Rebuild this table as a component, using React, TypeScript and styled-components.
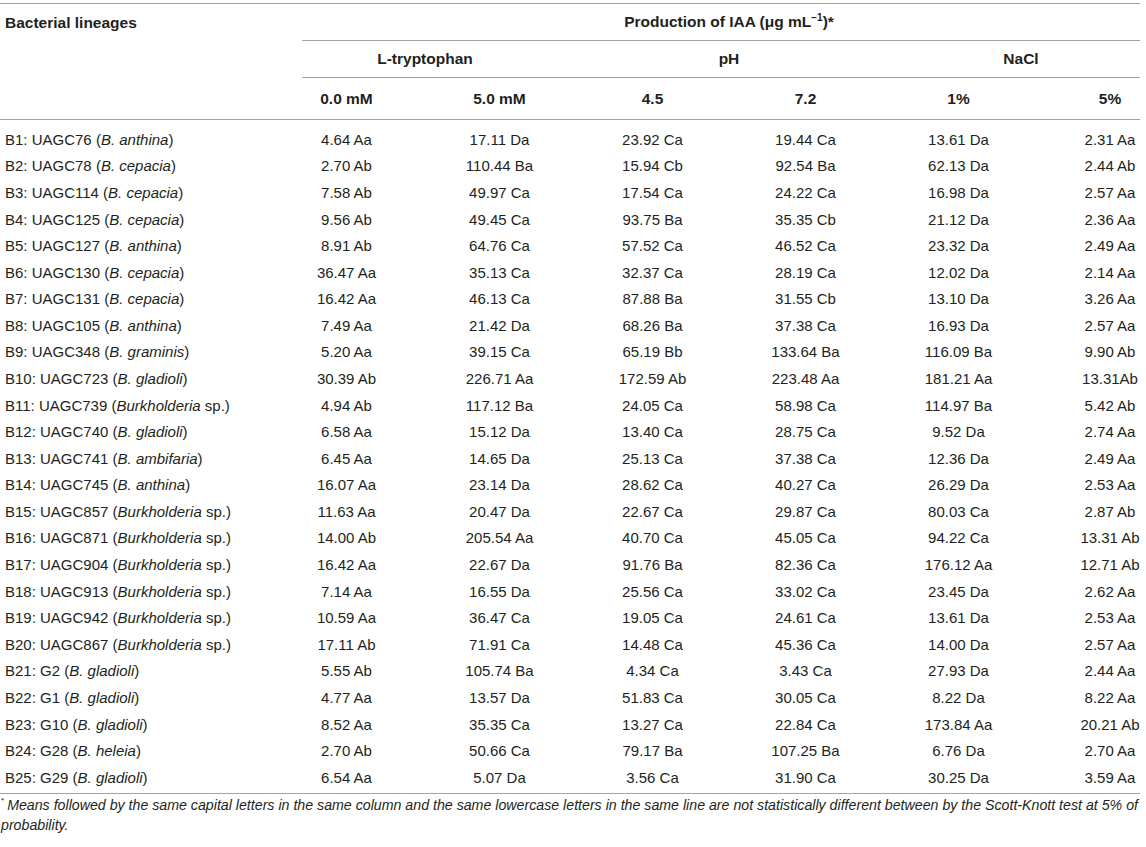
import React from "react";
import styled, { createGlobalStyle } from "styled-components";

const GlobalStyle = createGlobalStyle`
  html, body { margin: 0; padding: 0; background: #ffffff; }
  body { font-family: "Liberation Sans", Arial, Helvetica, sans-serif; color: #231f20; }
`;

const COLS = "270px repeat(5, 153px) 105px";
const RULE = "#a3a3a3";

const Page = styled.div`
  width: 1140px;
  padding-top: 3px;
`;

const Head = styled.div`
  display: grid;
  grid-template-columns: ${COLS};
  grid-template-rows: 37px 37px 41px;
  border-top: 1px solid ${RULE};
  border-bottom: 1px solid ${RULE};
  font-size: 15.5px;
  font-weight: 700;
`;

const Corner = styled.div`
  grid-column: 1;
  grid-row: 1 / 4;
  padding: 10px 0 0 5px;
  line-height: 18px;
`;

const Group = styled.div<{ $col: string; $row: number; $inset?: number; $pl?: number; $pr?: number }>`
  grid-column: ${(p) => p.$col};
  grid-row: ${(p) => p.$row};
  margin-left: ${(p) => p.$inset ?? 0}px;
  padding: 0 ${(p) => p.$pr ?? 0}px 0 ${(p) => p.$pl ?? 0}px;
  border-bottom: 1px solid ${RULE};
  display: flex;
  align-items: center;
  justify-content: center;
  white-space: nowrap;
`;

const Sub = styled.div<{ $last?: boolean }>`
  grid-row: 3;
  display: flex;
  align-items: center;
  justify-content: center;
  padding-left: ${(p) => (p.$last ? "45px" : "0")};
  white-space: nowrap;
`;

const Sup = styled.sup`
  font-size: 10px;
  font-weight: 700;
  line-height: 0;
  vertical-align: 6px;
`;

const Body = styled.div`
  display: grid;
  grid-template-columns: ${COLS};
  grid-auto-rows: 26.58px;
  padding: 6px 0 3px;
  border-bottom: 1px solid ${RULE};
  font-size: 15px;
`;

const Label = styled.div`
  display: flex;
  align-items: center;
  padding-left: 5px;
  white-space: nowrap;
`;

const Value = styled.div<{ $last?: boolean }>`
  display: flex;
  align-items: center;
  justify-content: center;
  padding-left: ${(p) => (p.$last ? "45px" : "0")};
  white-space: nowrap;
`;

const Note = styled.p`
  margin: 1px 0 0;
  padding-left: 1px;
  font-size: 14.2px;
  font-style: italic;
  line-height: 20px;
`;

const NoteMark = styled.span`
  display: inline-block;
  font-size: 8px;
  font-style: normal;
  line-height: 8px;
  vertical-align: top;
  margin: 2px 3px 0 0;
`;

type Row = [string, string, string[]];

const rows: Row[] = [
  ["B1: UAGC76", "B. anthina", ["4.64 Aa", "17.11 Da", "23.92 Ca", "19.44 Ca", "13.61 Da", "2.31 Aa"]],
  ["B2: UAGC78", "B. cepacia", ["2.70 Ab", "110.44 Ba", "15.94 Cb", "92.54 Ba", "62.13 Da", "2.44 Ab"]],
  ["B3: UAGC114", "B. cepacia", ["7.58 Ab", "49.97 Ca", "17.54 Ca", "24.22 Ca", "16.98 Da", "2.57 Aa"]],
  ["B4: UAGC125", "B. cepacia", ["9.56 Ab", "49.45 Ca", "93.75 Ba", "35.35 Cb", "21.12 Da", "2.36 Aa"]],
  ["B5: UAGC127", "B. anthina", ["8.91 Ab", "64.76 Ca", "57.52 Ca", "46.52 Ca", "23.32 Da", "2.49 Aa"]],
  ["B6: UAGC130", "B. cepacia", ["36.47 Aa", "35.13 Ca", "32.37 Ca", "28.19 Ca", "12.02 Da", "2.14 Aa"]],
  ["B7: UAGC131", "B. cepacia", ["16.42 Aa", "46.13 Ca", "87.88 Ba", "31.55 Cb", "13.10 Da", "3.26 Aa"]],
  ["B8: UAGC105", "B. anthina", ["7.49 Aa", "21.42 Da", "68.26 Ba", "37.38 Ca", "16.93 Da", "2.57 Aa"]],
  ["B9: UAGC348", "B. graminis", ["5.20 Aa", "39.15 Ca", "65.19 Bb", "133.64 Ba", "116.09 Ba", "9.90 Ab"]],
  ["B10: UAGC723", "B. gladioli", ["30.39 Ab", "226.71 Aa", "172.59 Ab", "223.48 Aa", "181.21 Aa", "13.31Ab"]],
  ["B11: UAGC739", "Burkholderia sp.", ["4.94 Ab", "117.12 Ba", "24.05 Ca", "58.98 Ca", "114.97 Ba", "5.42 Ab"]],
  ["B12: UAGC740", "B. gladioli", ["6.58 Aa", "15.12 Da", "13.40 Ca", "28.75 Ca", "9.52 Da", "2.74 Aa"]],
  ["B13: UAGC741", "B. ambifaria", ["6.45 Aa", "14.65 Da", "25.13 Ca", "37.38 Ca", "12.36 Da", "2.49 Aa"]],
  ["B14: UAGC745", "B. anthina", ["16.07 Aa", "23.14 Da", "28.62 Ca", "40.27 Ca", "26.29 Da", "2.53 Aa"]],
  ["B15: UAGC857", "Burkholderia sp.", ["11.63 Aa", "20.47 Da", "22.67 Ca", "29.87 Ca", "80.03 Ca", "2.87 Ab"]],
  ["B16: UAGC871", "Burkholderia sp.", ["14.00 Ab", "205.54 Aa", "40.70 Ca", "45.05 Ca", "94.22 Ca", "13.31 Ab"]],
  ["B17: UAGC904", "Burkholderia sp.", ["16.42 Aa", "22.67 Da", "91.76 Ba", "82.36 Ca", "176.12 Aa", "12.71 Ab"]],
  ["B18: UAGC913", "Burkholderia sp.", ["7.14 Aa", "16.55 Da", "25.56 Ca", "33.02 Ca", "23.45 Da", "2.62 Aa"]],
  ["B19: UAGC942", "Burkholderia sp.", ["10.59 Aa", "36.47 Ca", "19.05 Ca", "24.61 Ca", "13.61 Da", "2.53 Aa"]],
  ["B20: UAGC867", "Burkholderia sp.", ["17.11 Ab", "71.91 Ca", "14.48 Ca", "45.36 Ca", "14.00 Da", "2.57 Aa"]],
  ["B21: G2", "B. gladioli", ["5.55 Ab", "105.74 Ba", "4.34 Ca", "3.43 Ca", "27.93 Da", "2.44 Aa"]],
  ["B22: G1", "B. gladioli", ["4.77 Aa", "13.57 Da", "51.83 Ca", "30.05 Ca", "8.22 Da", "8.22 Aa"]],
  ["B23: G10", "B. gladioli", ["8.52 Aa", "35.35 Ca", "13.27 Ca", "22.84 Ca", "173.84 Aa", "20.21 Ab"]],
  ["B24: G28", "B. heleia", ["2.70 Ab", "50.66 Ca", "79.17 Ba", "107.25 Ba", "6.76 Da", "2.70 Aa"]],
  ["B25: G29", "B. gladioli", ["6.54 Aa", "5.07 Da", "3.56 Ca", "31.90 Ca", "30.25 Da", "3.59 Aa"]],
];

const subHeads = ["0.0 mM", "5.0 mM", "4.5", "7.2", "1%", "5%"];

const Species: React.FC<{ name: string }> = ({ name }) => {
  if (name.endsWith(" sp.")) {
    return (
      <>
        <i>{name.slice(0, -4)}</i>
        {" sp."}
      </>
    );
  }
  return <i>{name}</i>;
};

export default function App() {
  return (
    <Page>
      <GlobalStyle />
      <Head>
        <Corner>Bacterial lineages</Corner>
        <Group $col="2 / 8" $row={1} $inset={32} $pl={16}>
          <span>
            Production of IAA (μg mL<Sup>−1</Sup>)*
          </span>
        </Group>
        <Group $col="2 / 4" $row={2} $inset={32} $pr={28}>
          L-tryptophan
        </Group>
        <Group $col="4 / 6" $row={2}>
          pH
        </Group>
        <Group $col="6 / 8" $row={2} $pl={20}>
          NaCl
        </Group>
        {subHeads.map((h, i) => (
          <Sub key={h} $last={i === 5}>
            {h}
          </Sub>
        ))}
      </Head>
      <Body>
        {rows.map(([code, sp, vals]) => (
          <React.Fragment key={code}>
            <Label>
              <span>
                {code} (<Species name={sp} />)
              </span>
            </Label>
            {vals.map((v, i) => (
              <Value key={i} $last={i === 5}>
                {v}
              </Value>
            ))}
          </React.Fragment>
        ))}
      </Body>
      <Note>
        <NoteMark>*</NoteMark>Means followed by the same capital letters in the same column and the same lowercase
        letters in the same line are not statistically different between by the Scott-Knott test at 5% of
        probability.
      </Note>
    </Page>
  );
}
